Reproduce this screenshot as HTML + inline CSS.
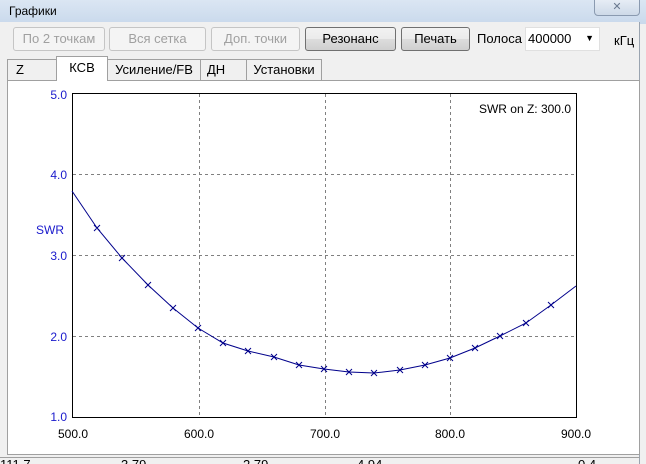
<!DOCTYPE html>
<html><head><meta charset="utf-8"><style>
*{margin:0;padding:0;box-sizing:border-box}
body{width:646px;height:464px;overflow:hidden;background:#f0f0f0;font-family:"Liberation Sans",sans-serif;font-size:13px;position:relative}
.title{position:absolute;left:0;top:0;width:646px;height:24px;background:linear-gradient(#dbe6f3,#c9d9ec);}
.title span{position:absolute;left:9px;top:4px;font-size:12px;color:#000}
.close{position:absolute;left:594px;top:-2px;width:46px;height:18px;border:1px solid #8a9ab0;border-radius:0 0 4px 4px;background:linear-gradient(#e8eef6,#cdd9e8);color:#6b7a90;text-align:center;font-size:11px;line-height:16px}
.client{position:absolute;left:0;top:22px;width:640px;height:442px;background:#f0f0f0;border-right:1px solid #9aa4b0}
.btn{position:absolute;top:27px;height:24px;border:1px solid #707070;border-radius:3px;background:linear-gradient(#f2f2f2,#ebebeb 50%,#dddddd 51%,#cfcfcf);text-align:center;line-height:22px;font-size:13px;white-space:nowrap}
.dis{color:#a0a0a0;border-color:#c5c5c5;background:#f4f4f4}
.tab{position:absolute;top:59px;height:22px;border:1px solid #a0a0a0;border-bottom:none;background:#f0f0f0;line-height:20px;text-align:center;font-size:13px;white-space:nowrap}
.panel{position:absolute;left:7px;top:80px;width:633px;height:375px;background:#fff;border:1px solid #a0a0a0}
</style></head><body>
<div class="title"><span>Графики</span></div>
<div class="close">✕</div>
<div class="client"></div>
<div class="btn dis" style="left:13px;width:92px">По 2 точкам</div>
<div class="btn dis" style="left:109px;width:97px">Вся сетка</div>
<div class="btn dis" style="left:211px;width:89px">Доп. точки</div>
<div class="btn" style="left:305px;width:91px">Резонанс</div>
<div class="btn" style="left:401px;width:69px">Печать</div>
<div style="position:absolute;left:477px;top:31px">Полоса</div>
<div style="position:absolute;left:525px;top:27px;width:75px;height:24px;background:#fff;border:1px solid #e0e0e0;padding:3px 2px">400000<span style="position:absolute;right:5px;top:5px;font-size:9px">▼</span></div>
<div style="position:absolute;left:614px;top:33px">кГц</div>
<div class="tab" style="left:7px;width:50px;text-align:left;padding-left:8px">Z</div>
<div class="tab" style="left:56px;width:52px;top:56px;height:25px;background:#fff;z-index:2;line-height:22px">КСВ</div>
<div class="tab" style="left:107px;width:94px">Усиление/FB</div>
<div class="tab" style="left:200px;width:47px;text-align:left;padding-left:6px">ДН</div>
<div class="tab" style="left:246px;width:76px">Установки</div>
<div class="panel"></div>
<svg style="position:absolute;left:0;top:0" width="646" height="464" font-family="Liberation Sans, sans-serif" font-size="12">
<g stroke="#808080" stroke-dasharray="3,3" stroke-width="1">
<line x1="199.5" y1="94" x2="199.5" y2="417"/><line x1="325.5" y1="94" x2="325.5" y2="417"/><line x1="450.5" y1="94" x2="450.5" y2="417"/>
<line x1="73" y1="174.5" x2="576" y2="174.5"/><line x1="73" y1="255.5" x2="576" y2="255.5"/><line x1="73" y1="336.5" x2="576" y2="336.5"/>
</g>
<rect x="72.5" y="93.5" width="504" height="324" fill="none" stroke="#000"/>
<g fill="#1a1acc" text-anchor="end"><text x="67" y="99">5.0</text><text x="67" y="179">4.0</text><text x="67" y="260">3.0</text><text x="67" y="341">2.0</text><text x="67" y="421">1.0</text><text x="64" y="234" text-anchor="end">SWR</text></g>
<g fill="#000" text-anchor="middle"><text x="73" y="438">500.0</text><text x="199" y="438">600.0</text><text x="325" y="438">700.0</text><text x="450" y="438">800.0</text><text x="576" y="438">900.0</text></g>
<text x="571" y="113" text-anchor="end" fill="#000">SWR on Z: 300.0</text>
<polyline fill="none" stroke="#00008b" stroke-width="1" points="72,191 97,228 122,258 148,285 173,308 198,328 223,343 248,351 274,357 299,365 324,369 349,372 374,373 400,370 425,365 450,358 475,348 500,336 526,323 551,305 576,286"/>
<path stroke="#00008b" fill="none" d="M94,225l6,6m0,-6l-6,6M119,255l6,6m0,-6l-6,6M145,282l6,6m0,-6l-6,6M170,305l6,6m0,-6l-6,6M195,325l6,6m0,-6l-6,6M220,340l6,6m0,-6l-6,6M245,348l6,6m0,-6l-6,6M271,354l6,6m0,-6l-6,6M296,362l6,6m0,-6l-6,6M321,366l6,6m0,-6l-6,6M346,369l6,6m0,-6l-6,6M371,370l6,6m0,-6l-6,6M397,367l6,6m0,-6l-6,6M422,362l6,6m0,-6l-6,6M447,355l6,6m0,-6l-6,6M472,345l6,6m0,-6l-6,6M497,333l6,6m0,-6l-6,6M523,320l6,6m0,-6l-6,6M548,302l6,6m0,-6l-6,6"/>
<g font-size="13" fill="#000"><text x="0" y="469">111.7</text><text x="121" y="469">3.79</text><text x="243" y="469">2.79</text><text x="357" y="469">4.94</text><text x="480" y="469">---</text><text x="578" y="469">0.4</text></g>
<line x1="0" y1="457.5" x2="640" y2="457.5" stroke="#a0a0a0"/>
</svg>
</body></html>
